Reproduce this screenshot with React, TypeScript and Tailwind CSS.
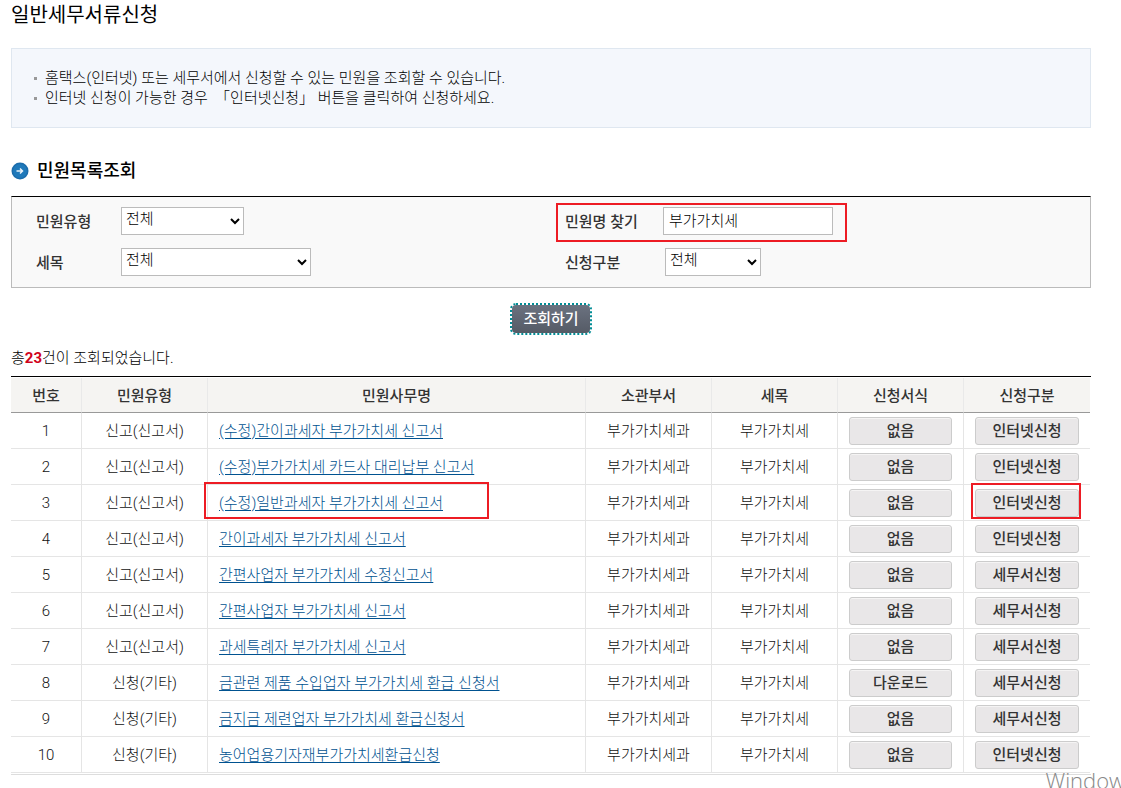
import { ReactNode } from "react";

interface Petition {
  no: number;
  type: string;
  name: string;
  form: string;
  method: string;
  marked?: boolean;
}

const petitions: Petition[] = [
  { no: 1, type: "신고(신고서)", name: "(수정)간이과세자 부가가치세 신고서", form: "없음", method: "인터넷신청" },
  { no: 2, type: "신고(신고서)", name: "(수정)부가가치세 카드사 대리납부 신고서", form: "없음", method: "인터넷신청" },
  { no: 3, type: "신고(신고서)", name: "(수정)일반과세자 부가가치세 신고서", form: "없음", method: "인터넷신청", marked: true },
  { no: 4, type: "신고(신고서)", name: "간이과세자 부가가치세 신고서", form: "없음", method: "인터넷신청" },
  { no: 5, type: "신고(신고서)", name: "간편사업자 부가가치세 수정신고서", form: "없음", method: "세무서신청" },
  { no: 6, type: "신고(신고서)", name: "간편사업자 부가가치세 신고서", form: "없음", method: "세무서신청" },
  { no: 7, type: "신고(신고서)", name: "과세특례자 부가가치세 신고서", form: "없음", method: "세무서신청" },
  { no: 8, type: "신청(기타)", name: "금관련 제품 수입업자 부가가치세 환급 신청서", form: "다운로드", method: "세무서신청" },
  { no: 9, type: "신청(기타)", name: "금지금 제련업자 부가가치세 환급신청서", form: "없음", method: "세무서신청" },
  { no: 10, type: "신청(기타)", name: "농어업용기자재부가가치세환급신청", form: "없음", method: "인터넷신청" },
];

const columns = ["번호", "민원유형", "민원사무명", "소관부서", "세목", "신청서식", "신청구분"];

const labelClass = "shrink-0 pt-0.5 font-medium text-[#333]";
const fieldClass = "h-7 border border-[#bbb] bg-white pb-1 font-light text-black";

const ArrowBadge = () => (
  <svg width="18" height="18" viewBox="0 0 18 18" aria-hidden="true">
    <circle cx="9" cy="9" r="8.5" fill="#1b6cab" />
    <circle cx="9" cy="9" r="7" fill="#1f79ba" />
    <path d="M5.5 9h6M9 6.5 11.5 9 9 11.5" fill="none" stroke="#e8f2fa" strokeWidth="1.5" />
  </svg>
);

const Notice = ({ children }: { children: ReactNode }) => (
  <li className="flex items-center gap-2">
    <span className="h-[3px] w-[3px] bg-[#999]" />
    <span className="whitespace-pre">{children}</span>
  </li>
);

const CellButton = ({ children }: { children: ReactNode }) => (
  <button
    type="button"
    className="h-7 w-full rounded-[3px] border border-[#ccc] bg-[#e9e7e8] pt-px font-medium leading-6 text-[#333] shadow-[inset_0_1px_0_#f5f4f4]"
  >
    {children}
  </button>
);

const SearchForm = () => (
  <form className="grid grid-cols-2 gap-y-[13px] border border-[#bbb] border-t-black bg-[#f9f9f9] pb-[11px] pt-[10px]">
    <div className="flex items-center pl-6">
      <label htmlFor="type" className={`${labelClass} w-[85px]`}>민원유형</label>
      <select id="type" className={`${fieldClass} w-[123px]`}>
        <option>전체</option>
      </select>
    </div>
    <div className="flex items-center pl-[14px]">
      <div className="relative flex items-center">
        <label htmlFor="name" className={`${labelClass} w-[98px]`}>민원명 찾기</label>
        <input id="name" type="text" defaultValue="부가가치세" className={`${fieldClass} w-[170px] px-[5px]`} />
        <span className="pointer-events-none absolute -bottom-[7px] -left-[9px] -right-[14px] -top-1 border-2 border-[#ed1c24]" />
      </div>
    </div>
    <div className="flex items-center pl-6">
      <label htmlFor="tax" className={`${labelClass} w-[85px]`}>세목</label>
      <select id="tax" className={`${fieldClass} w-[190px]`}>
        <option>전체</option>
      </select>
    </div>
    <div className="flex items-center pl-[14px]">
      <label htmlFor="method" className={`${labelClass} w-[100px]`}>신청구분</label>
      <select id="method" className={`${fieldClass} w-24`}>
        <option>전체</option>
      </select>
    </div>
  </form>
);

const PetitionTable = () => (
  <div className="border-b border-t border-b-[#ddd] border-t-black py-px pr-px">
    <table className="w-full table-fixed border-separate border-spacing-0 text-center text-[#333]">
      <colgroup>
        <col className="w-[71px]" />
        <col className="w-[126px]" />
        <col />
        <col className="w-[126px]" />
        <col className="w-[126px]" />
        <col className="w-[126px]" />
        <col className="w-[126px]" />
      </colgroup>
      <thead>
        <tr className="h-[35px]">
          {columns.map((title) => (
            <th
              key={title}
              scope="col"
              className="border-b border-r border-b-[#999] border-r-[#e9e9e9] bg-[#f5f4f2] p-0 pt-0.5 font-medium last:border-r-0"
            >
              {title}
            </th>
          ))}
        </tr>
      </thead>
      <tbody className="font-light text-[#111] [&_td:last-child]:border-r-0 [&_td]:border-b [&_td]:border-r [&_td]:border-[#e5e5e5]">
        {petitions.map(({ no, type, name, form, method, marked }) => (
          <tr key={no} className="h-9">
            <td>{no}</td>
            <td>{type}</td>
            <td className="relative pl-[11px] text-left">
              <a href="#" className="text-[#005290] underline underline-offset-2">{name}</a>
              {marked && (
                <span className="pointer-events-none absolute -left-1 -top-[3px] h-[37px] w-[285px] border-2 border-[#ed1c24]" />
              )}
            </td>
            <td>부가가치세과</td>
            <td>부가가치세</td>
            <td className="px-[11px]">
              <CellButton>{form}</CellButton>
            </td>
            <td className="relative px-[11px]">
              <CellButton>{method}</CellButton>
              {marked && (
                <span className="pointer-events-none absolute -top-0.5 left-[7px] right-[9px] h-9 border-2 border-[#ed1c24]" />
              )}
            </td>
          </tr>
        ))}
      </tbody>
    </table>
  </div>
);

export default function App() {
  return (
    <div className="relative min-h-screen overflow-hidden bg-white pl-[11px] pr-[30px] font-['Roboto','Noto_Sans_CJK_KR',sans-serif] text-[15px] leading-5 text-black">
      <h1 className="pt-px text-xl leading-7">일반세무서류신청</h1>

      <ul className="mt-[19px] border border-[#dfe7f0] bg-[#f4f7fc] px-[22px] py-[19px] font-light">
        <Notice>홈택스(인터넷) 또는 세무서에서 신청할 수 있는 민원을 조회할 수 있습니다.</Notice>
        <Notice>{"인터넷 신청이 가능한 경우  「인터넷신청」 버튼을 클릭하여 신청하세요."}</Notice>
      </ul>

      <h2 className="mb-[11px] mt-[29px] flex items-center gap-2 text-lg font-medium leading-7">
        <ArrowBadge />
        민원목록조회
      </h2>

      <SearchForm />

      <div className="mt-[17px] flex justify-center">
        <button
          type="button"
          className="h-7 rounded-sm bg-gradient-to-b from-[#6b7280] to-[#555b66] px-[11px] font-medium leading-6 text-white outline-2 outline-dotted outline-[#008c95]"
        >
          조회하기
        </button>
      </div>

      <p className="mb-2 mt-[15px] font-light">
        총<strong className="font-bold text-[#d0021b]">23</strong>건이 조회되었습니다.
      </p>

      <PetitionTable />

      <p className="absolute -bottom-1.5 -right-1 whitespace-nowrap font-['Open_Sans',sans-serif] text-[22px] font-light leading-7 text-[#888]">
        Window
      </p>
    </div>
  );
}
